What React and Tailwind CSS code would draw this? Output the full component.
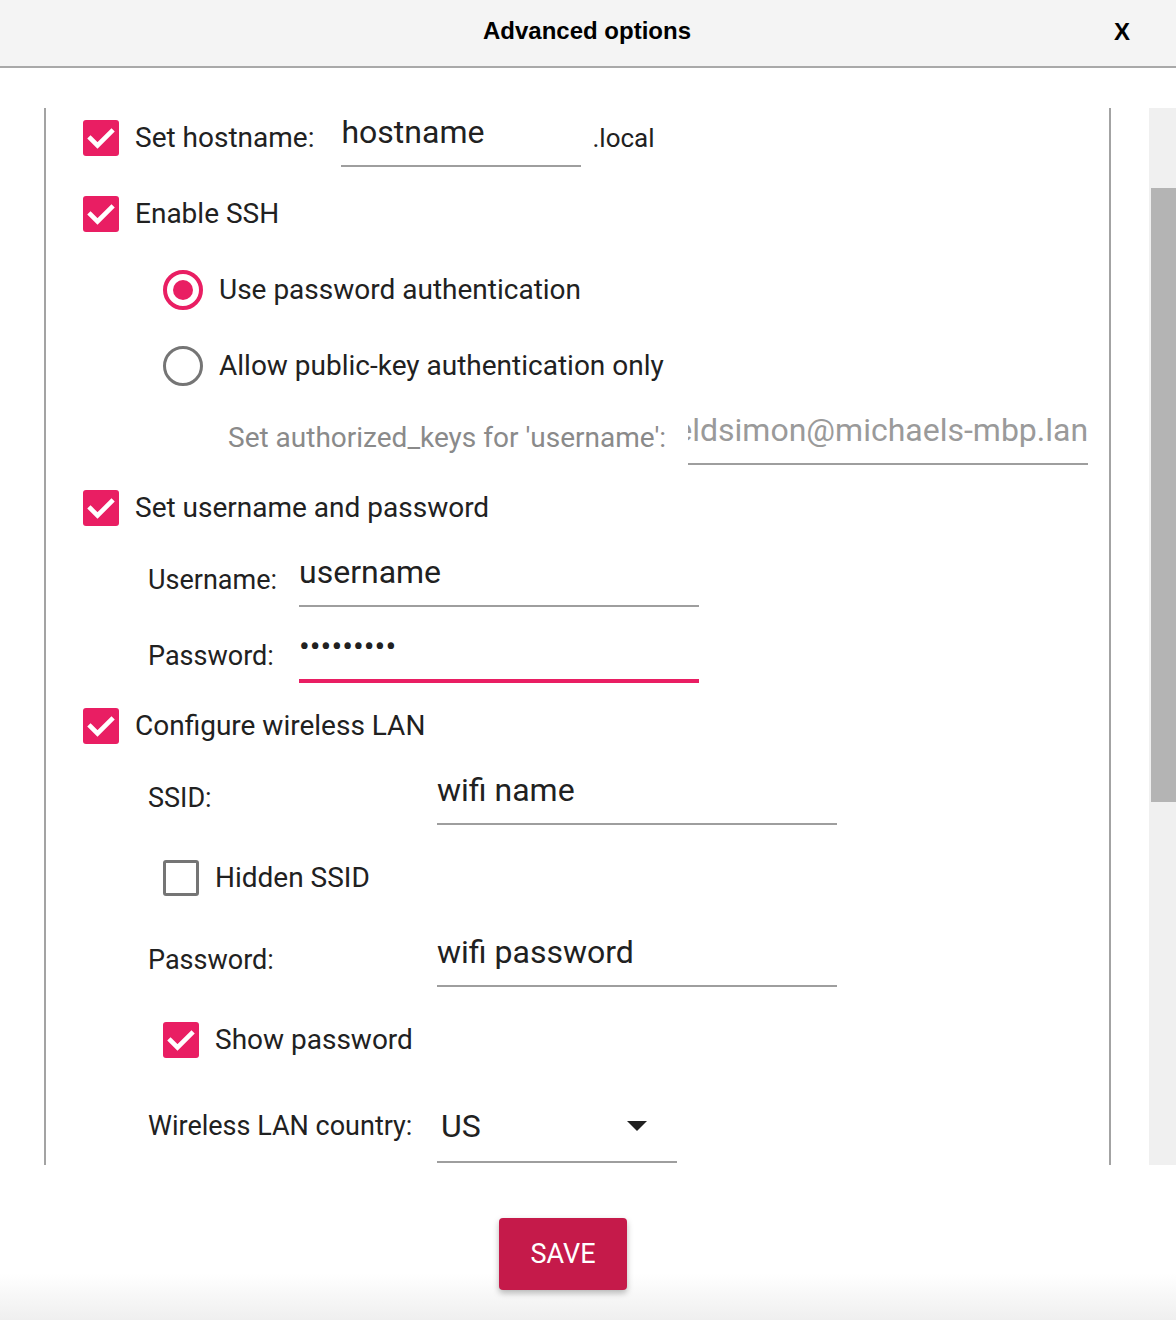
import React from 'react';

const PINK = 'bg-[#e91e63]';

// Material-like checkbox
const Checkbox = ({ checked }) =>
  checked ? (
    <div className={`w-9 h-9 shrink-0 rounded-[3px] ${PINK} flex items-center justify-center`}>
      <svg width="36" height="36" viewBox="0 0 36 36">
        <polyline points="7.5,18.5 14.5,25.5 28.5,11.5" fill="none" stroke="#fff" strokeWidth="4.6" strokeLinecap="square" />
      </svg>
    </div>
  ) : (
    <div className="w-9 h-9 shrink-0 rounded-[3px] border-[3px] border-[#757575] bg-white" />
  );

const Radio = ({ checked }) =>
  checked ? (
    <div className="w-10 h-10 shrink-0 rounded-full border-4 border-[#e91e63] flex items-center justify-center">
      <div className={`w-5 h-5 rounded-full ${PINK}`} />
    </div>
  ) : (
    <div className="w-10 h-10 shrink-0 rounded-full border-[3.5px] border-[#757575]" />
  );

// underlined text field
const Field = ({ value, width = 'w-[400px]', muted, focused, className = '' }) => (
  <div
    className={`${width} shrink-0 overflow-hidden whitespace-nowrap pb-[15px] text-[32px] leading-[36px] ${
      focused ? 'border-b-4 border-[#e91e63]' : 'border-b-2 border-[#9e9e9e]'
    } ${muted ? 'text-[#9a9a9a] flex justify-end' : 'text-[#212121]'} ${className}`}
  >
    <span>{value}</span>
  </div>
);

const Label = ({ children, className = '' }) => (
  <span className={`text-[28px] leading-[34px] text-[#212121] whitespace-nowrap ${className}`}>{children}</span>
);

const SubLabel = ({ children, className = '' }) => (
  <span className={`text-[27px] leading-[32px] text-[#212121] whitespace-nowrap shrink-0 ${className}`}>{children}</span>
);

export default function App() {
  return (
    <div className="w-[1176px] h-[1320px] bg-white flex flex-col overflow-hidden" style={{ fontFamily: 'Roboto, "Liberation Sans", sans-serif' }}>
      {/* Title bar */}
      <div className="h-[68px] shrink-0 bg-[#f4f4f4] border-b-2 border-[#a9a9a9] flex items-center relative pb-[4px]">
        <h1 className="flex-1 text-center text-[24px] font-bold text-black pr-[2px]" style={{ fontFamily: '"Liberation Sans", Arial, sans-serif' }}>
          Advanced options
        </h1>
        <span className="absolute right-[46px] top-[14px] text-[24px] font-bold text-black" style={{ fontFamily: '"Liberation Sans", Arial, sans-serif' }}>
          X
        </span>
      </div>

      {/* Scroll area */}
      <div className="mt-[40px] h-[1057px] shrink-0 flex">
        <div className="w-[44px] shrink-0" />
        <div className="w-[1067px] shrink-0 border-l-2 border-r-2 border-[#a3a3a3] overflow-hidden pl-[37px] flex flex-col">
          <div className="h-[60px] shrink-0 flex items-center">
            <Checkbox checked />
            <Label className="ml-4">Set hostname:</Label>
            <Field value="hostname" width="w-[240px]" className="ml-[27px] mt-[4px]" />
            <span className="ml-[11px] text-[26px] text-[#212121]">.local</span>
          </div>

          <div className="h-[92px] shrink-0 flex items-center">
            <Checkbox checked />
            <Label className="ml-4">Enable SSH</Label>
          </div>

          <div className="h-[60px] shrink-0 flex items-center pl-[80px]">
            <Radio checked />
            <Label className="ml-4">Use password authentication</Label>
          </div>

          <div className="h-[92px] shrink-0 flex items-center pl-[80px]">
            <Radio />
            <Label className="ml-4">Allow public-key authentication only</Label>
          </div>

          <div className="h-[52px] shrink-0 flex items-center pl-[145px]">
            <span className="text-[28px] leading-[32px] text-[#8a8a8a] whitespace-nowrap shrink-0">Set authorized_keys for 'username':</span>
            <Field value="michaeldsimon@michaels-mbp.lan" muted className="ml-[22px]" />
          </div>

          <div className="h-[88px] shrink-0 flex items-center">
            <Checkbox checked />
            <Label className="ml-4">Set username and password</Label>
          </div>

          <div className="h-[56px] shrink-0 flex items-center pl-[65px]">
            <SubLabel className="w-[151px]">Username:</SubLabel>
            <Field value="username" />
          </div>

          <div className="h-[96px] shrink-0 flex items-center pl-[65px]">
            <SubLabel className="w-[151px]">Password:</SubLabel>
            <Field value="•••••••••" focused className="pb-[13px] -mt-[2px]" />
          </div>

          <div className="h-[44px] shrink-0 flex items-center">
            <Checkbox checked />
            <Label className="ml-4">Configure wireless LAN</Label>
          </div>

          <div className="h-[100px] shrink-0 flex items-center pl-[65px]">
            <SubLabel className="w-[289px]">SSID:</SubLabel>
            <Field value="wifi name" />
          </div>

          <div className="h-[60px] shrink-0 flex items-center pl-[80px]">
            <Checkbox />
            <Label className="ml-4">Hidden SSID</Label>
          </div>

          <div className="h-[104px] shrink-0 flex items-center pl-[65px]">
            <SubLabel className="w-[289px]">Password:</SubLabel>
            <Field value="wifi password" />
          </div>

          <div className="h-[56px] shrink-0 flex items-center pl-[80px]">
            <Checkbox checked />
            <Label className="ml-4">Show password</Label>
          </div>

          <div className="h-[116px] shrink-0 flex items-center pl-[65px]">
            <SubLabel className="w-[289px]">Wireless LAN country:</SubLabel>
            <div className="w-[240px] shrink-0 mt-[19px] border-b-2 border-[#9e9e9e] pb-[17px] pl-[4px] pr-[30px] flex items-center justify-between text-[32px] leading-[36px] text-[#212121]">
              <span>US</span>
              <svg width="20" height="10" viewBox="0 0 20 10">
                <path d="M0 0 L20 0 L10 10 Z" fill="#212121" />
              </svg>
            </div>
          </div>
        </div>

        {/* scrollbar */}
        <div className="ml-[38px] w-[27px] shrink-0 bg-[#f0f0f0] pt-[80px] pl-[2px]">
          <div className="h-[614px] bg-[#b4b4b4]" />
        </div>
      </div>

      {/* Footer */}
      <div className="flex-1 bg-gradient-to-b from-white from-70% to-[#efefef] pt-[53px] pl-[499px]">
        <button className="w-[128px] h-[72px] rounded-[4px] bg-[#c51a4a] text-white text-[27px] shadow-[0_3px_6px_rgba(0,0,0,0.28)]">
          SAVE
        </button>
      </div>
    </div>
  );
}
